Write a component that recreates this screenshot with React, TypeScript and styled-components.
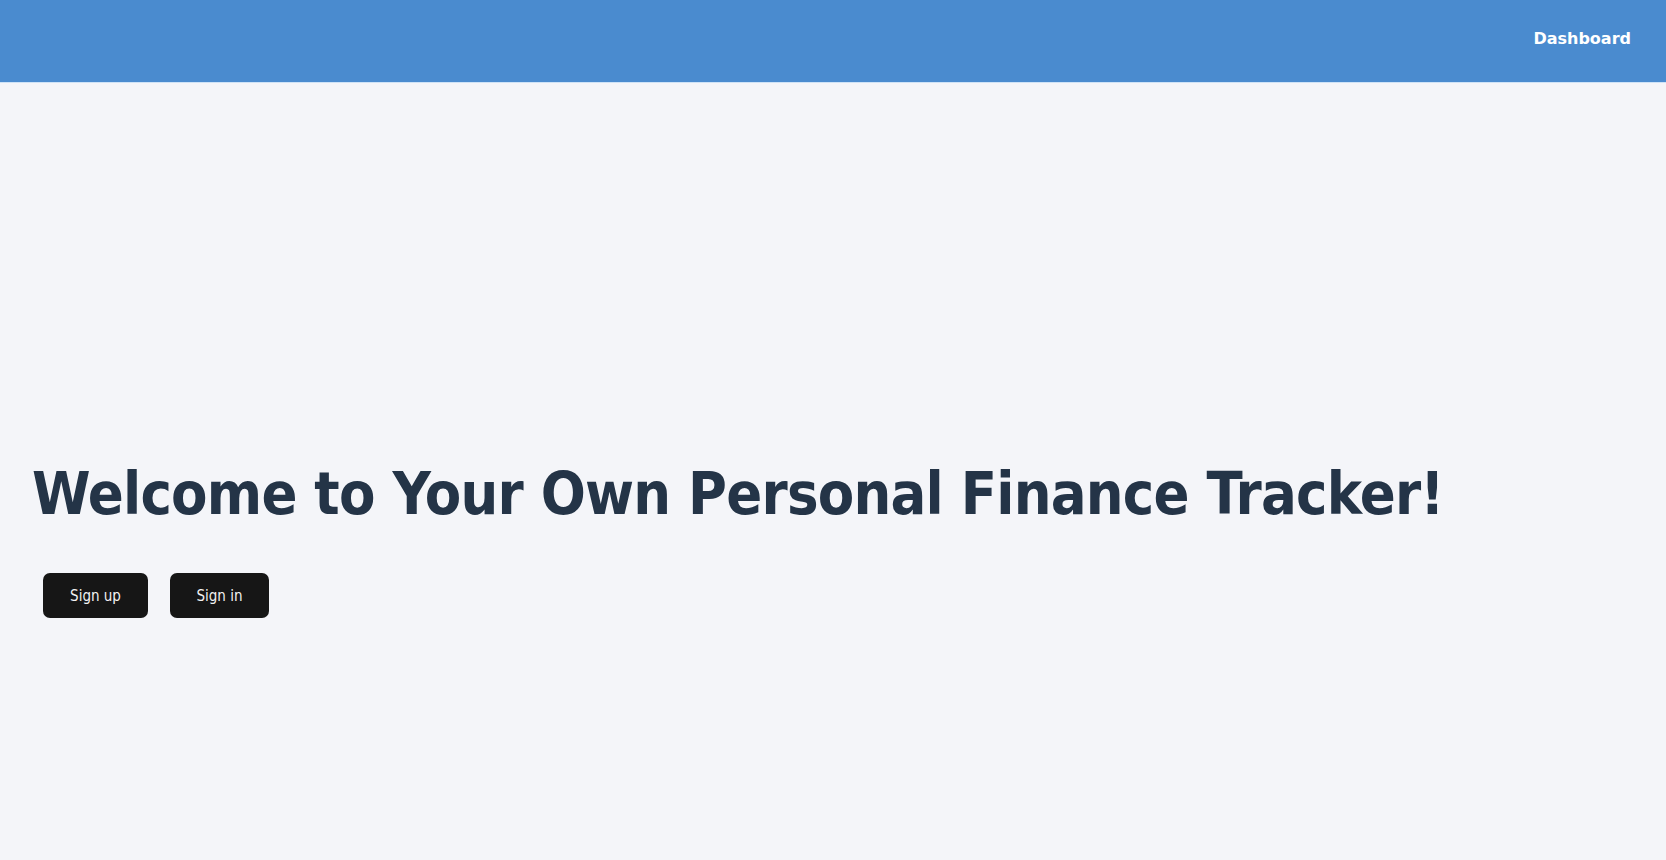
import React from "react";
import styled, { createGlobalStyle } from "styled-components";

const GlobalStyle = createGlobalStyle`
  html, body {
    margin: 0;
    padding: 0;
    background: #f4f5f9;
  }
  body {
    font-family: "DejaVu Sans Condensed", "DejaVu Sans", sans-serif;
  }
`;

const Page = styled.div`
  min-height: 860px;
  display: flex;
  flex-direction: column;
  background: #f4f5f9;
`;

const Header = styled.header`
  height: 83px;
  background: #4a8bcf;
  display: flex;
  align-items: center;
  justify-content: flex-end;
  padding: 0 35px;
  box-sizing: border-box;
  border-bottom: 1px solid #cfe3f7;
`;

const NavLink = styled.a`
  color: #ffffff;
  font-family: "DejaVu Sans", sans-serif;
  font-weight: bold;
  font-size: 16px;
  text-decoration: none;
  margin-top: -6px;
`;

const Main = styled.main`
  display: flex;
  flex-direction: column;
  align-items: flex-start;
  padding: 375px 32px 0;
`;

const Title = styled.h1`
  margin: 0;
  font-size: 59px;
  line-height: 71px;
  font-weight: bold;
  letter-spacing: -0.75px;
  color: #243447;
`;

const Actions = styled.div`
  display: flex;
  gap: 22px;
  margin-top: 44px;
  padding-left: 11px;
`;

const Button = styled.button<{ $w: number }>`
  width: ${(p) => p.$w}px;
  height: 45px;
  border: none;
  border-radius: 7px;
  background: #161616;
  color: #f2f2f2;
  font-family: "DejaVu Sans Condensed", "DejaVu Sans", sans-serif;
  font-size: 15px;
  cursor: pointer;
`;

export default function App() {
  return (
    <>
      <GlobalStyle />
      <Page>
        <Header>
          <NavLink href="#">Dashboard</NavLink>
        </Header>
        <Main>
          <Title>Welcome to Your Own Personal Finance Tracker!</Title>
          <Actions>
            <Button $w={105}>Sign up</Button>
            <Button $w={99}>Sign in</Button>
          </Actions>
        </Main>
      </Page>
    </>
  );
}
